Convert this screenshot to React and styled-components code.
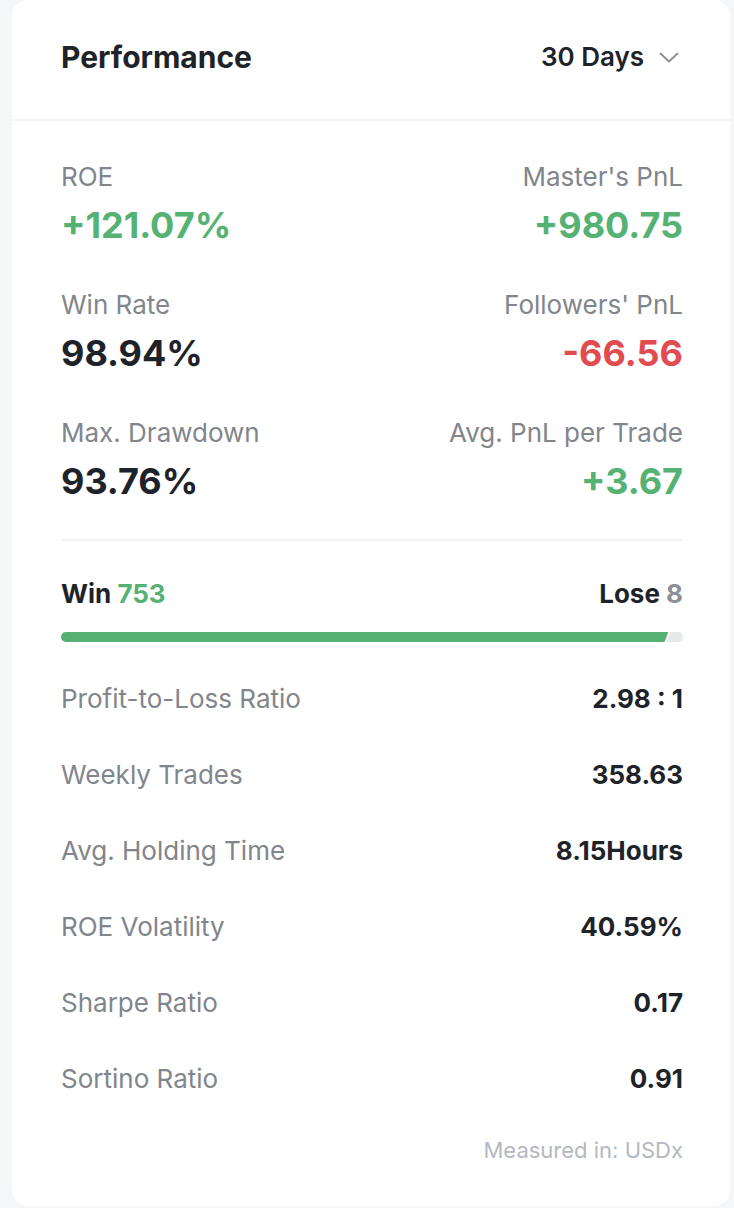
import React from 'react';
import styled, { createGlobalStyle } from 'styled-components';

const GlobalStyle = createGlobalStyle`
  * { box-sizing: border-box; }
  body {
    margin: 0;
    background: #f5f6f8;
    font-family: Inter, "Noto Sans", Roboto, sans-serif;
    -webkit-font-smoothing: antialiased;
  }
`;

const stats = [
  { left: { label: 'ROE', value: '+121.07%', tone: 'up' }, right: { label: "Master's PnL", value: '+980.75', tone: 'up' } },
  { left: { label: 'Win Rate', value: '98.94%' }, right: { label: "Followers' PnL", value: '-66.56', tone: 'down' } },
  { left: { label: 'Max. Drawdown', value: '93.76%' }, right: { label: 'Avg. PnL per Trade', value: '+3.67', tone: 'up' } },
];

const details = [
  ['Profit-to-Loss Ratio', '2.98 : 1'],
  ['Weekly Trades', '358.63'],
  ['Avg. Holding Time', '8.15Hours'],
  ['ROE Volatility', '40.59%'],
  ['Sharpe Ratio', '0.17'],
  ['Sortino Ratio', '0.91'],
];

const toneColor = (tone) => (tone === 'up' ? '#55b273' : tone === 'down' ? '#e24b4f' : '#1e2329');

const App = () => {
  const win = 753;
  const lose = 8;
  const winPct = (win / (win + lose)) * 100;

  return (
    <Page>
      <GlobalStyle />
      <Card>
        <Header>
          <Title>Performance</Title>
          <Period>
            30 Days
            <svg width="24" height="24" viewBox="0 0 24 24" fill="none">
              <path d="M1.5 8.5l8.5 8 8.5-8" stroke="#8a8f97" strokeWidth="1.8" strokeLinecap="round" strokeLinejoin="round" />
            </svg>
          </Period>
        </Header>
        <Body>
          <StatGrid>
            {stats.map((row, i) => (
              <React.Fragment key={i}>
                <Stat>
                  <StatLabel>{row.left.label}</StatLabel>
                  <StatValue $tone={row.left.tone}>{row.left.value}</StatValue>
                </Stat>
                <Stat $right>
                  <StatLabel>{row.right.label}</StatLabel>
                  <StatValue $tone={row.right.tone}>{row.right.value}</StatValue>
                </Stat>
              </React.Fragment>
            ))}
          </StatGrid>
          <Divider />
          <WinLose>
            <span>Win <Count $tone="up">{win}</Count></span>
            <span>Lose <Count>{lose}</Count></span>
          </WinLose>
          <Bar>
            <BarWin style={{ width: `calc(${winPct}% - 8px)` }} />
            <BarLose />
          </Bar>
          <DetailList>
            {details.map(([label, value]) => (
              <DetailRow key={label}>
                <DetailLabel>{label}</DetailLabel>
                <DetailValue>{value}</DetailValue>
              </DetailRow>
            ))}
          </DetailList>
          <Footnote>Measured in: USDx</Footnote>
        </Body>
      </Card>
    </Page>
  );
};

const Page = styled.div`
  padding: 0 4px 2px 12px;
`;

const Card = styled.div`
  background: #fff;
  border-radius: 16px;
  width: 718px;
`;

const Header = styled.div`
  height: 121px;
  display: flex;
  align-items: center;
  justify-content: space-between;
  padding: 0 48px 6px 49px;
  border-bottom: 2px solid #f2f3f5;
`;

const Title = styled.div`
  font-size: 30px;
  font-weight: 700;
  color: #1e2329;
`;

const Period = styled.div`
  display: flex;
  align-items: center;
  gap: 15px;
  margin-right: -1px;
  font-size: 26px;
  font-weight: 600;
  color: #1e2329;
`;

const Body = styled.div`
  padding: 40px 47px 42px 49px;
`;

const StatGrid = styled.div`
  display: grid;
  grid-template-columns: 1fr 1fr;
  row-gap: 42px;
`;

const Stat = styled.div`
  display: flex;
  flex-direction: column;
  align-items: ${(p) => (p.$right ? 'flex-end' : 'flex-start')};
  gap: 10px;
`;

const StatLabel = styled.div`
  font-size: 26px;
  line-height: 32px;
  color: #81858c;
`;

const StatValue = styled.div`
  font-size: 36px;
  line-height: 44px;
  font-weight: 700;
  color: ${(p) => toneColor(p.$tone)};
`;

const Divider = styled.div`
  height: 2px;
  background: #f2f3f5;
  margin: 36px 0 37px;
`;

const WinLose = styled.div`
  display: flex;
  justify-content: space-between;
  font-size: 26px;
  line-height: 32px;
  font-weight: 700;
  color: #1e2329;
`;

const Count = styled.span`
  color: ${(p) => (p.$tone === 'up' ? '#55b273' : '#8a8f97')};
`;

const Bar = styled.div`
  display: flex;
  gap: 2px;
  height: 10px;
  margin-top: 22px;
`;

const BarWin = styled.div`
  background: #55b273;
  border-radius: 5px 0 0 5px;
  clip-path: polygon(0 0, 100% 0, calc(100% - 4px) 100%, 0 100%);
`;

const BarLose = styled.div`
  flex: 1;
  background: #e6e8ea;
  border-radius: 0 5px 5px 0;
  margin-left: -4px;
  clip-path: polygon(4px 0, 100% 0, 100% 100%, 0 100%);
`;

const DetailList = styled.div`
  margin-top: 18px;
`;

const DetailRow = styled.div`
  display: flex;
  justify-content: space-between;
  align-items: center;
  height: 76px;
`;

const DetailLabel = styled.div`
  font-size: 26px;
  color: #81858c;
`;

const DetailValue = styled.div`
  font-size: 26px;
  font-weight: 700;
  color: #1e2329;
`;

const Footnote = styled.div`
  margin-top: 20px;
  text-align: right;
  font-size: 22px;
  line-height: 28px;
  color: #b4b9c0;
`;

export default App;
